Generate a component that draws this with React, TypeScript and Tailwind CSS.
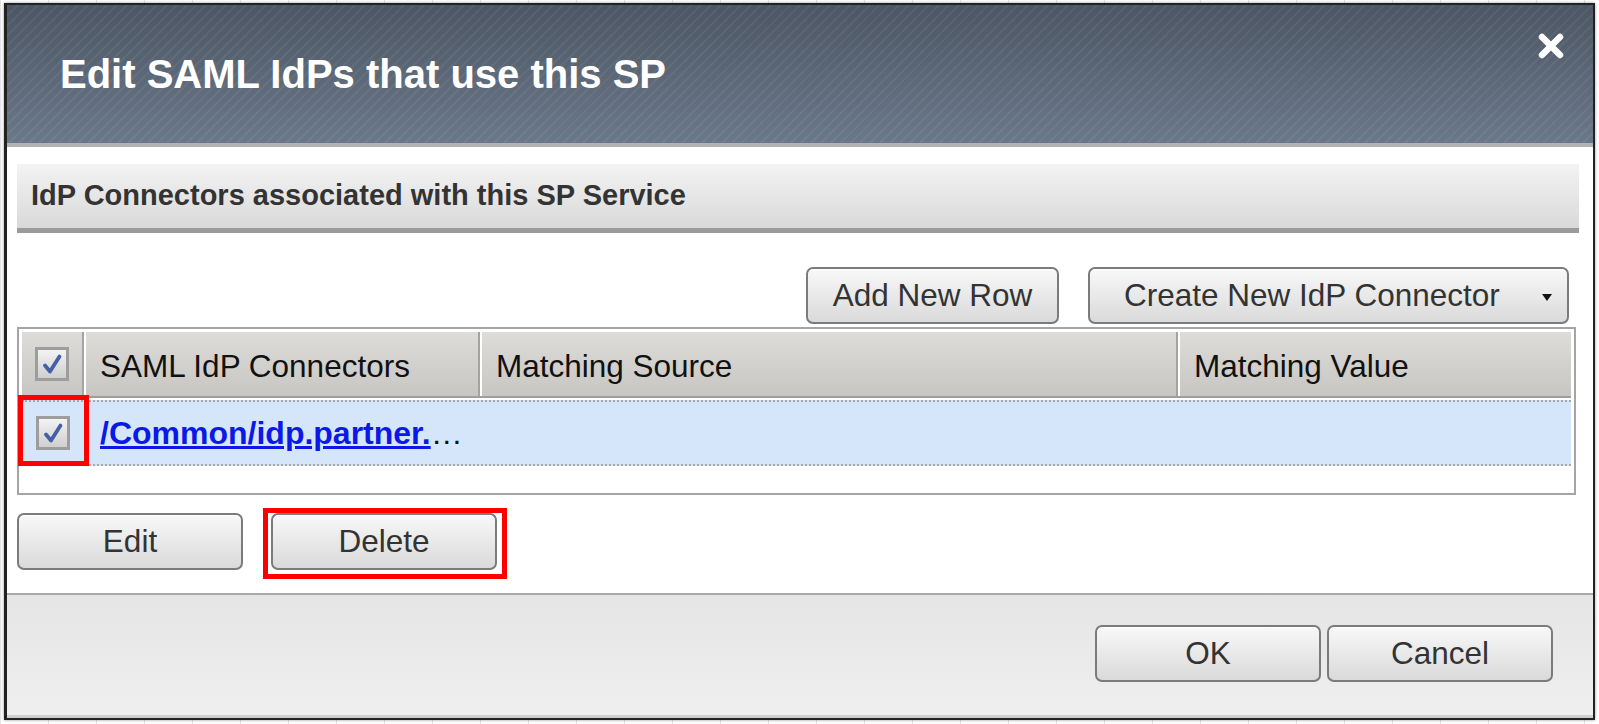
import React from "react";

function Check() {
  return (
    <div className="flex h-[34px] w-[34px] items-center justify-center border-[3px] border-[#9d9d9d] bg-linear-to-b from-[#f3f3f3] to-[#cfcfcf]">
      <svg width="24" height="24" viewBox="0 0 24 24" fill="none">
        <path d="M5 13.5 L10 19.5 L19.5 4.5" stroke="#4660a8" strokeWidth="3.8" strokeLinecap="round" strokeLinejoin="round" />
      </svg>
    </div>
  );
}

function Btn({ label, className = "" }: { label: string; className?: string }) {
  return (
    <button
      className={`flex h-[57px] items-center justify-center rounded-[7px] border-2 border-[#7b7b7b] bg-linear-to-b from-[#f8f8f8] to-[#dadada] text-[31.5px] text-[#333] shadow-[inset_0_1px_0_#fff] ${className}`}
    >
      {label}
    </button>
  );
}

export default function App() {
  return (
    <div className="h-[724px] w-[1599px] overflow-hidden bg-white bg-[linear-gradient(to_right,#e4e4e4_1px,transparent_1px)] bg-[size:48px_48px] pt-[3px] pl-[4px] font-['Liberation_Sans',Arial,sans-serif]">
      <div className="flex h-[717px] w-[1591px] flex-col border-2 border-l-[3px] border-[#222] bg-white shadow-[0_0_3px_rgba(0,0,0,0.4)]">
        {/* title bar */}
        <div className="flex h-[142px] shrink-0 items-start justify-between border-b-4 border-[#b3b3b3] bg-[repeating-linear-gradient(135deg,rgba(255,255,255,0.05)_0px,rgba(255,255,255,0.05)_2px,transparent_2px,transparent_7px),linear-gradient(to_bottom,#4c5664,#6b7889)]">
          <h1 className="mt-[45px] pl-[53px] text-[40px] font-bold leading-[48px] text-white">
            Edit SAML IdPs that use this SP
          </h1>
          <svg className="mt-[28px] mr-[29px]" width="26" height="26" viewBox="0 0 26 26">
            <path d="M4 4 L22 22 M22 4 L4 22" stroke="#fff" strokeWidth="6.5" strokeLinecap="round" />
          </svg>
        </div>

        {/* body */}
        <div className="flex flex-col pt-[17px] pl-[10px] pr-[14px]">
          <div className="flex h-[69px] items-center border-b-[5px] border-[#9b9b9b] bg-linear-to-b from-[#f3f3f3] to-[#d9d9d9] pl-[14px] text-[29px] font-bold text-[#333]">
            IdP Connectors associated with this SP Service
          </div>

          <div className="mt-[34px] flex justify-end gap-[29px] pr-[10px]">
            <Btn label="Add New Row" className="w-[253px]" />
            <button className="relative flex h-[57px] w-[481px] items-center rounded-[7px] border-2 border-[#7b7b7b] bg-linear-to-b from-[#f8f8f8] to-[#dadada] pl-[34px] text-[31.5px] text-[#333] shadow-[inset_0_1px_0_#fff]">
              Create New IdP Connector
              <span className="absolute right-[15px] top-[25px] h-0 w-0 border-x-[5px] border-t-[7px] border-x-transparent border-t-[#111]" />
            </button>
          </div>

          {/* table */}
          <div className="relative mt-[3px] mr-[3px] h-[168px] border-2 border-[#a5a5a5] p-[3px] pb-0">
            <div className="grid h-[66px] grid-cols-[62px_396px_698px_1fr] border-b-2 border-[#9e9e9e] bg-linear-to-b from-[#dedcd8] to-[#c8c6c2] text-[31.5px] text-[#111]">
              <div className="flex items-center justify-center border-r-2 border-[#a3a3a3]">
                <Check />
              </div>
              <div className="flex items-center border-r-2 border-l-2 border-[#a3a3a3] border-l-white pt-[6px] pl-[14px]">
                SAML IdP Connectors
              </div>
              <div className="flex items-center border-r-2 border-l-2 border-[#a3a3a3] border-l-white pt-[6px] pl-[14px]">
                Matching Source
              </div>
              <div className="flex items-center border-l-2 border-l-white pt-[6px] pl-[14px]">Matching Value</div>
            </div>
            <div className="mt-[2px] grid h-[66px] grid-cols-[62px_1fr] border-y-2 border-dotted border-[#a8a8a8] bg-[#d6e6fa] text-[32px]">
              <div className="flex items-center justify-center">
                <Check />
              </div>
              <div className="flex items-center pl-[16px] whitespace-nowrap text-[#111]">
                <a href="#" className="font-bold text-[#0a18e8] underline">
                  /Common/idp.partner.
                </a>
                <span>…</span>
              </div>
            </div>
            <div className="pointer-events-none absolute left-[-1px] top-[66px] h-[71px] w-[71px] border-[5px] border-[#ff0000]" />
          </div>

          <div className="mt-[18px] flex gap-[28px]">
            <Btn label="Edit" className="w-[226px]" />
            <div className="relative">
              <Btn label="Delete" className="w-[226px]" />
              <div className="pointer-events-none absolute left-[-8px] top-[-5px] h-[71px] w-[244px] border-[5px] border-[#ff0000]" />
            </div>
          </div>
        </div>

        {/* footer */}
        <div className="mt-[23px] flex flex-1 justify-end gap-[6px] border-t-2 border-b-[3px] border-t-[#a9a9a9] border-b-[#cfcfcf] bg-linear-to-b from-[#e5e5e5] to-[#efefef] pt-[30px] pr-[40px]">
          <Btn label="OK" className="w-[226px]" />
          <Btn label="Cancel" className="w-[226px]" />
        </div>
      </div>
    </div>
  );
}
